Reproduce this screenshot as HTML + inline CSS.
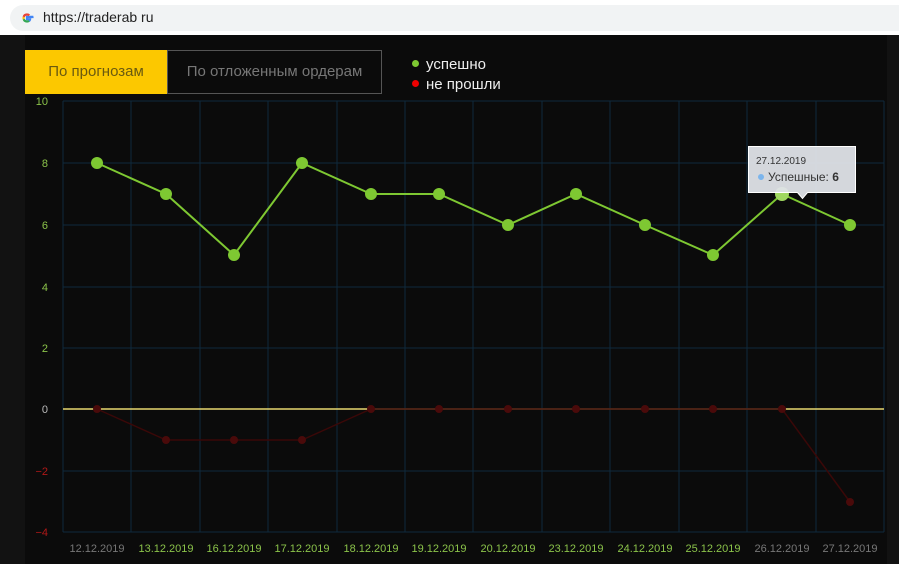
<!DOCTYPE html>
<html><head><meta charset="utf-8"><style>
body{margin:0;width:899px;height:564px;overflow:hidden;background:#121212;font-family:"Liberation Sans",sans-serif;position:relative}
.bar{position:absolute;left:0;top:0;width:899px;height:35px;background:#fff}
.url{position:absolute;left:10px;top:5px;width:889px;height:26px;background:#f1f3f4;border-radius:13px 0 0 13px}
.panel{position:absolute;left:25px;top:35px;width:862px;height:529px;background:#0b0b0b}
.btn{position:absolute;top:50px;height:44px;line-height:44px;font-size:15px;text-align:center}
</style></head><body>
<div class="bar"><div class="url">
<svg style="position:absolute;left:10px;top:6px" width="14" height="14" viewBox="0 0 14 14"><path d="M12.5 7.1c0-.4 0-.8-.1-1.2H7v2.3h3.1c-.1.7-.5 1.3-1.1 1.7" fill="none" stroke="#4285f4" stroke-width="2.2"/><path d="M9 9.9c-.5.4-1.2.6-2 .6-1.6 0-2.9-1-3.3-2.4" fill="none" stroke="#34a853" stroke-width="2.2"/><path d="M3.7 8.1c-.2-.7-.2-1.5 0-2.2" fill="none" stroke="#fbbc05" stroke-width="2.2"/><path d="M3.7 5.9C4.1 4.5 5.4 3.5 7 3.5c.9 0 1.7.3 2.3.9" fill="none" stroke="#ea4335" stroke-width="2.2"/></svg>
<span style="position:absolute;left:33px;top:4px;font-size:14px;color:#222">https://traderab ru</span></div></div>
<div class="panel"></div>
<div class="btn" style="left:25px;width:142px;background:#fcc800;color:#6a5a10">По прогнозам</div>
<div class="btn" style="left:167px;width:213px;border:1px solid #555;height:42px;line-height:42px;color:#777;background:#0b0b0b">По отложенным ордерам</div>
<div style="position:absolute;left:412px;top:55px;font-size:15px;color:#eee;line-height:20px">
<div><span style="display:inline-block;width:7px;height:7px;border-radius:50%;background:#7ec832;margin-right:7px;vertical-align:2px"></span>успешно</div>
<div><span style="display:inline-block;width:7px;height:7px;border-radius:50%;background:#e00;margin-right:7px;vertical-align:2px"></span>не прошли</div></div>
<svg style="position:absolute;left:0;top:0" width="899" height="564" font-family="Liberation Sans,sans-serif">
<g stroke="#0f2a3d" stroke-width="1">
<line x1="63" y1="101" x2="884" y2="101"/><line x1="63" y1="163" x2="884" y2="163"/><line x1="63" y1="225" x2="884" y2="225"/><line x1="63" y1="287" x2="884" y2="287"/><line x1="63" y1="348" x2="884" y2="348"/><line x1="63" y1="471" x2="884" y2="471"/><line x1="63" y1="532" x2="884" y2="532"/>
<line x1="63" y1="101" x2="63" y2="532"/><line x1="131" y1="101" x2="131" y2="532"/><line x1="200" y1="101" x2="200" y2="532"/><line x1="268" y1="101" x2="268" y2="532"/><line x1="337" y1="101" x2="337" y2="532"/><line x1="405" y1="101" x2="405" y2="532"/><line x1="473" y1="101" x2="473" y2="532"/><line x1="542" y1="101" x2="542" y2="532"/><line x1="610" y1="101" x2="610" y2="532"/><line x1="679" y1="101" x2="679" y2="532"/><line x1="747" y1="101" x2="747" y2="532"/><line x1="816" y1="101" x2="816" y2="532"/><line x1="884" y1="101" x2="884" y2="532"/>
</g>
<line x1="63" y1="409" x2="884" y2="409" stroke="#e8d870" stroke-width="1.5"/>
<g font-size="11" text-anchor="end"><text x="48" y="105" fill="#8bc34a">10</text><text x="48" y="167" fill="#8bc34a">8</text><text x="48" y="229" fill="#8bc34a">6</text><text x="48" y="291" fill="#8bc34a">4</text><text x="48" y="352" fill="#8bc34a">2</text><text x="48" y="413" fill="#bbb">0</text><text x="48" y="475" fill="#b01818">−2</text><text x="48" y="536" fill="#b01818">−4</text></g>
<polyline fill="none" stroke="#3a0808" stroke-width="1.5" points="97,409 166,440 234,440 302,440 371,409 439,409 508,409 576,409 645,409 713,409 782,409 850,502"/>
<g fill="#4a0a0a"><circle cx="97" cy="409" r="4"/><circle cx="166" cy="440" r="4"/><circle cx="234" cy="440" r="4"/><circle cx="302" cy="440" r="4"/><circle cx="371" cy="409" r="4"/><circle cx="439" cy="409" r="4"/><circle cx="508" cy="409" r="4"/><circle cx="576" cy="409" r="4"/><circle cx="645" cy="409" r="4"/><circle cx="713" cy="409" r="4"/><circle cx="782" cy="409" r="4"/><circle cx="850" cy="502" r="4"/></g>
<polyline fill="none" stroke="#7ec832" stroke-width="2" points="97,163 166,194 234,255 302,163 371,194 439,194 508,225 576,194 645,225 713,255 782,194 850,225"/>
<g fill="#7ec832"><circle cx="97" cy="163" r="6"/><circle cx="166" cy="194" r="6"/><circle cx="234" cy="255" r="6"/><circle cx="302" cy="163" r="6"/><circle cx="371" cy="194" r="6"/><circle cx="439" cy="194" r="6"/><circle cx="508" cy="225" r="6"/><circle cx="576" cy="194" r="6"/><circle cx="645" cy="225" r="6"/><circle cx="713" cy="255" r="6"/><circle cx="782" cy="194" r="7" fill="#a0d860"/><circle cx="850" cy="225" r="6"/></g>
<g font-size="11" text-anchor="middle" fill="#8bc34a"><text x="97" y="552" fill="#777">12.12.2019</text><text x="166" y="552">13.12.2019</text><text x="234" y="552">16.12.2019</text><text x="302" y="552">17.12.2019</text><text x="371" y="552">18.12.2019</text><text x="439" y="552">19.12.2019</text><text x="508" y="552">20.12.2019</text><text x="576" y="552">23.12.2019</text><text x="645" y="552">24.12.2019</text><text x="713" y="552">25.12.2019</text><text x="782" y="552" fill="#777">26.12.2019</text><text x="850" y="552" fill="#777">27.12.2019</text></g>
<path d="M748.5 146.5h107v46h-48l-5 6-5-6h-49z" fill="#dfe3e8" fill-opacity="0.95" stroke="#fff"/>
<text x="756" y="164" font-size="10" fill="#333">27.12.2019</text>
<circle cx="761" cy="177" r="3" fill="#7cb5ec"/>
<text x="768" y="181" font-size="12" fill="#333">Успешные: <tspan font-weight="bold">6</tspan></text>
</svg>
</body></html>
